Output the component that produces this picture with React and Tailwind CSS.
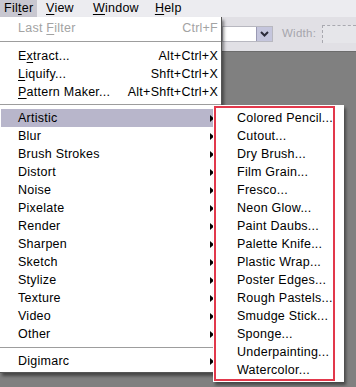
const FONT = { fontFamily: '"Liberation Sans", Arial, sans-serif' };

const FILTERS = [
  'Artistic', 'Blur', 'Brush Strokes', 'Distort', 'Noise', 'Pixelate', 'Render',
  'Sharpen', 'Sketch', 'Stylize', 'Texture', 'Video', 'Other',
];

const ARTISTIC = [
  'Colored Pencil...', 'Cutout...', 'Dry Brush...', 'Film Grain...', 'Fresco...',
  'Neon Glow...', 'Paint Daubs...', 'Palette Knife...', 'Plastic Wrap...',
  'Poster Edges...', 'Rough Pastels...', 'Smudge Stick...', 'Sponge...',
  'Underpainting...', 'Watercolor...',
];

const Arrow = () => (
  <svg width="4" height="7" viewBox="0 0 4 7" className="absolute left-[209px] top-[6px]">
    <path d="M0 0 L4 3.5 L0 7 Z" fill="#000" />
  </svg>
);

const Sep = ({ h }) => (
  <div className={`flex flex-col justify-center ${h}`}>
    <div className="h-px bg-[#9d9d9d]" />
    <div className="h-px bg-white" />
  </div>
);

const Item = ({ label, shortcut, disabled, active, sub }) => (
  <div
    className={`relative h-[18px] flex items-center pl-[17px] pr-[2px] mx-[1px] ${
      active ? 'bg-[#b8b6cb]' : ''
    } ${disabled ? 'text-[#a3a3a3]' : 'text-black'}`}
  >
    <span className="flex-1">{label}</span>
    {shortcut && <span>{shortcut}</span>}
    {sub && <Arrow />}
  </div>
);

const U = ({ children }) => <span className="underline underline-offset-2">{children}</span>;

export default function App() {
  return (
    <div
      className="relative w-[356px] h-[387px] overflow-hidden bg-[#808080] text-[12.5px] tracking-[0.25px] leading-none"
      style={FONT}
    >
      {/* menu bar */}
      <div className="h-[17px] bg-[#ececf0] flex items-center text-black">
        <div className="h-full w-[37px] bg-[#c8c7d0] flex items-center pl-[4px]">
          Fil<U>t</U>er
        </div>
        <div className="ml-[9px]"><U>V</U>iew</div>
        <div className="ml-[19px]"><U>W</U>indow</div>
        <div className="ml-[16px]"><U>H</U>elp</div>
      </div>

      {/* options bar */}
      <div className="h-[35px] bg-[#e1e0e5] border-b border-[#6c6c6c] flex items-center pl-[222px]">
        <div className="w-[51px] h-[16px] bg-white border border-[#b8b8c0] flex justify-end">
          <div className="w-[16px] h-full bg-[#c5c6dd] border-l border-[#9a9ab4] flex items-center justify-center">
            <svg width="9" height="6" viewBox="0 0 9 6">
              <path d="M1 1 L4.5 4.5 L8 1" stroke="#2b2b3a" strokeWidth="2" fill="none" />
            </svg>
          </div>
        </div>
        <span className="ml-[9px] text-[#a6a6ad] text-[11.5px]">Width:</span>
        <div className="ml-[6px] flex-1 h-[18px] border-l border-t border-dashed border-[#a9a9b0] bg-[#e6e6ea]" />
      </div>

      {/* Filter menu */}
      <div className="absolute left-0 top-[17px] w-[222px] bg-white border-r border-[#555] border-b shadow-[2px_3px_3px_rgba(0,0,0,0.45)] pt-[2px] pb-[2px]">
        <Item label={<>Last <U>F</U>ilter</>} shortcut="Ctrl+F" disabled />
        <Sep h="h-[10px]" />
        <Item label={<>E<U>x</U>tract...</>} shortcut="Alt+Ctrl+X" />
        <Item label={<><U>L</U>iquify...</>} shortcut="Shft+Ctrl+X" />
        <Item label={<><U>P</U>attern Maker...</>} shortcut="Alt+Shft+Ctrl+X" />
        <Sep h="h-[8px]" />
        {FILTERS.map((f, i) => (
          <Item key={f} label={f} sub active={i === 0} />
        ))}
        <Sep h="h-[9px]" />
        <Item label="Digimarc" sub />
      </div>

      {/* Artistic submenu */}
      <div className="absolute left-[213px] top-[105px] w-[131px] bg-white pl-[1px] pt-[1px] pb-[1px] shadow-[2px_3px_3px_rgba(0,0,0,0.45)]">
        <div className="w-[121px] border-2 border-[#e2384b] pt-[1px]">
          {ARTISTIC.map((a) => (
            <div key={a} className="h-[18px] flex items-center pl-[21px] text-black whitespace-nowrap">
              {a}
            </div>
          ))}
        </div>
      </div>
    </div>
  );
}
